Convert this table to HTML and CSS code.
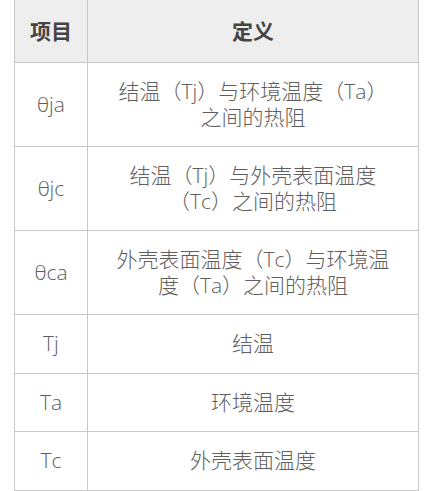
FILE: index.html
```html
<!DOCTYPE html>
<html lang="zh-CN">
<head>
<meta charset="utf-8">
<link rel="stylesheet" href="styles.css">
</head>
<body>
<table class="spec">
  <colgroup>
    <col class="col-item">
    <col class="col-def">
  </colgroup>
  <thead>
    <tr><th>项目</th><th>定义</th></tr>
  </thead>
  <tbody>
    <tr><td>θja</td><td>结温（Tj）与环境温度（Ta）之间的热阻</td></tr>
    <tr><td>θjc</td><td>结温（Tj）与外壳表面温度（Tc）之间的热阻</td></tr>
    <tr><td>θca</td><td>外壳表面温度（Tc）与环境温度（Ta）之间的热阻</td></tr>
    <tr><td>Tj</td><td>结温</td></tr>
    <tr><td>Ta</td><td>环境温度</td></tr>
    <tr><td>Tc</td><td>外壳表面温度</td></tr>
  </tbody>
</table>
</body>
</html>
```
FILE: styles.css
```css
html, body {
  margin: 0;
  padding: 0;
  background: #ffffff;
}
body {
  padding-left: 14px;
}
.spec {
  border-collapse: collapse;
  table-layout: fixed;
  width: 404px;
  font-family: "Open Sans", "Noto Sans CJK SC", sans-serif;
  font-size: 21px;
  font-weight: 300;
  line-height: 25.5px;
  color: #5e5e5e;
}
.col-item { width: 73px; }
.col-def { width: 331px; }
.spec th, .spec td {
  border: 1px solid #c8c8c8;
  text-align: center;
  vertical-align: middle;
  padding: 16px 27px;
}
.spec th {
  border-top: none;
  background: #eeeeee;
  color: #444444;
  font-weight: bold;
  padding-top: 18px;
  padding-bottom: 18px;
  line-height: 26px;
}
.spec th:first-child,
.spec td:first-child {
  padding-left: 2px;
  padding-right: 2px;
}
```
